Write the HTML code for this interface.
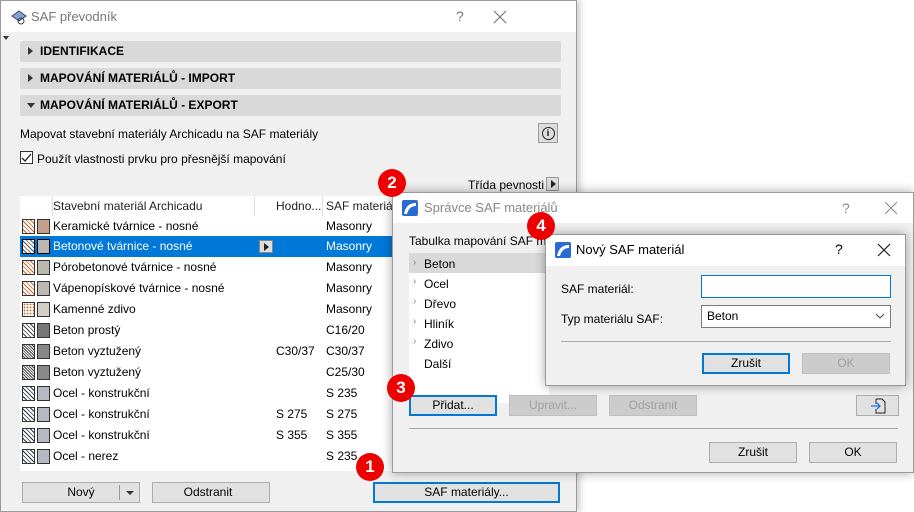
<!DOCTYPE html>
<html><head><meta charset="utf-8"><style>
*{box-sizing:border-box;margin:0;padding:0}
body{width:914px;height:509px;overflow:hidden;background:#fff;font-family:"Liberation Sans",sans-serif;font-size:12px;color:#000;position:relative}
.a{position:absolute;white-space:nowrap}
.btn{position:absolute;background:#e1e1e1;border:1px solid #adadad;text-align:center;font-size:12px;line-height:18px;white-space:nowrap}
.btn.b{border:2px solid #0078d7;line-height:16px}
.btn.d{color:#a0a0a0;background:#ccc;border-color:#bfbfbf}
.sec{position:absolute;left:20px;width:541px;height:21px;background:#d9d9d9;border-radius:2px;font-weight:bold;font-size:12px;line-height:21px;padding-left:20px}
.sec:before{content:"";position:absolute;left:8px;top:6px;border-left:5px solid #333;border-top:4px solid transparent;border-bottom:4px solid transparent}
.sec.o:before{left:7px;top:8px;border-top:5px solid #333;border-left:4px solid transparent;border-right:4px solid transparent;border-bottom:0}
.row{position:absolute;left:20px;width:372px;height:21px;line-height:21px;white-space:nowrap}
.row span{position:absolute;white-space:nowrap}
.h1{left:2px;top:3px;width:13px;height:15px;border:1px solid #333}
.h2{left:17px;top:3px;width:13px;height:15px;border:1px solid #333}
.red{position:absolute;width:28px;height:28px;border-radius:50%;background:#e00;color:#fff;font-weight:bold;font-size:17px;text-align:center;line-height:28px}
.win{position:absolute;background:#f0f0f0;border:1px solid #9a9a9a;box-shadow:0 0 10px rgba(0,0,0,.35)}
.tb{position:absolute;left:0;top:0;right:0;background:#fff}
</style></head><body>
<div class="win" style="left:0;top:0;width:577px;height:512px;box-shadow:2px 0 8px rgba(0,0,0,.25)">
 <div class="tb" style="height:31px">
  <svg class="a" style="left:9px;top:7px" width="18" height="18"><path d="M2 8 L9 3 L16 8 L9 13Z" fill="#7fa5d8" stroke="#445" stroke-width="1"/><circle cx="11" cy="13" r="3" fill="none" stroke="#444"/></svg>
  <span class="a" style="left:30px;top:8px;font-size:13px;color:#777">SAF převodník</span>
  <span class="a" style="left:455px;top:7px;font-size:14px;color:#777">?</span>
  <svg class="a" style="left:492px;top:9px" width="14" height="14"><path d="M1 1L13 13M13 1L1 13" stroke="#777" stroke-width="1.2"/></svg>
 </div>
 <div class="a" style="left:2px;top:35px;border-top:4px solid #333;border-left:3px solid transparent;border-right:3px solid transparent"></div>
</div>
<div class="sec" style="top:41px">IDENTIFIKACE</div>
<div class="sec" style="top:68px">MAPOVÁNÍ MATERIÁLŮ - IMPORT</div>
<div class="sec o" style="top:95px">MAPOVÁNÍ MATERIÁLŮ - EXPORT</div>
<div class="a" style="left:20px;top:127px">Mapovat stavební materiály Archicadu na SAF materiály</div>
<div class="a" style="left:538px;top:123px;width:20px;height:20px;background:#ddd;border:1px solid #999;text-align:center;line-height:18px"><span style="display:inline-block;width:13px;height:13px;border:1px solid #222;border-radius:50%;font-size:9px;line-height:11px;font-weight:bold;vertical-align:middle">i</span></div>
<div class="a" style="left:20px;top:151px;width:13px;height:13px;border:1px solid #333;background:#fff"><svg width="11" height="11" style="position:absolute;left:0;top:0"><path d="M1 6L4 9L10 2" stroke="#222" fill="none" stroke-width="1.3"/></svg></div>
<div class="a" style="left:37px;top:152px">Použít vlastnosti prvku pro přesnější mapování</div>
<div class="a" style="left:468px;top:178px">Třída pevnosti</div>
<div class="a" style="left:546px;top:177px;width:13px;height:14px;background:#ddd;border:1px solid #999"><div style="position:absolute;left:4px;top:2px;border-left:5px solid #222;border-top:4px solid transparent;border-bottom:4px solid transparent"></div></div>
<div class="a" style="left:20px;top:196px;width:372px;height:275px;background:#fff"></div>
<div class="row" style="top:196px;height:20px;line-height:20px;color:#222"><span style="left:32px;top:0;width:1px;height:20px;background:#ddd"></span><span style="left:33px">Stavební materiál Archicadu</span><span style="left:234px;width:1px;height:20px;background:#ddd"></span><span style="left:256px">Hodno...</span><span style="left:302px;width:1px;height:20px;background:#ddd"></span><span style="left:306px">SAF materiál</span></div>
<div class="row" style="top:216px"><span class="h1" style="background:repeating-linear-gradient(45deg,#fff 0 2px,#d06020 2px 3px)"></span><span class="h2" style="background:#c4a08a"></span><span style="left:33px">Keramické tvárnice - nosné</span><span style="left:306px">Masonry</span></div>
<div class="row" style="top:236px;background:#0078d7;color:#fff"><span class="h1" style="background:repeating-linear-gradient(45deg,#fff 0 2px,#555 2px 3px);border-color:#000"></span><span class="h2" style="background:#bbb8b2;border-color:#000"></span><span style="left:33px">Betonové tvárnice - nosné</span><span style="left:239px;top:4px;width:14px;height:13px;background:#ddd;border:1px solid #888"></span><span style="left:244px;top:7px;border-left:5px solid #222;border-top:4px solid transparent;border-bottom:4px solid transparent"></span><span style="left:306px">Masonry</span></div>
<div class="row" style="top:257px"><span class="h1" style="background:repeating-linear-gradient(45deg,#fff 0 2px,#d06020 2px 3px)"></span><span class="h2" style="background:#bbb8b2"></span><span style="left:33px">Pórobetonové tvárnice - nosné</span><span style="left:306px">Masonry</span></div>
<div class="row" style="top:278px"><span class="h1" style="background:repeating-linear-gradient(45deg,#fff 0 2px,#d06020 2px 3px)"></span><span class="h2" style="background:#bbb8b2"></span><span style="left:33px">Vápenopískové tvárnice - nosné</span><span style="left:306px">Masonry</span></div>
<div class="row" style="top:299px"><span class="h1" style="background:radial-gradient(#d06020 0.7px,#fff 1px) 0 0/3px 3px"></span><span class="h2" style="background:#d4cfc4"></span><span style="left:33px">Kamenné zdivo</span><span style="left:306px">Masonry</span></div>
<div class="row" style="top:320px"><span class="h1" style="background:repeating-linear-gradient(45deg,#fff 0 2px,#444 2px 3px)"></span><span class="h2" style="background:#777"></span><span style="left:33px">Beton prostý</span><span style="left:306px">C16/20</span></div>
<div class="row" style="top:341px"><span class="h1" style="background:repeating-linear-gradient(45deg,#fff 0 1px,#444 1px 2px)"></span><span class="h2" style="background:#888"></span><span style="left:33px">Beton vyztužený</span><span style="left:256px">C30/37</span><span style="left:306px">C30/37</span></div>
<div class="row" style="top:362px"><span class="h1" style="background:repeating-linear-gradient(45deg,#fff 0 1px,#444 1px 2px)"></span><span class="h2" style="background:#888"></span><span style="left:33px">Beton vyztužený</span><span style="left:306px">C25/30</span></div>
<div class="row" style="top:383px"><span class="h1" style="background:repeating-linear-gradient(45deg,#fff 0 2px,#234 2px 3px)"></span><span class="h2" style="background:#b8b8c4"></span><span style="left:33px">Ocel - konstrukční</span><span style="left:306px">S 235</span></div>
<div class="row" style="top:404px"><span class="h1" style="background:repeating-linear-gradient(45deg,#fff 0 2px,#234 2px 3px)"></span><span class="h2" style="background:#b8b8c4"></span><span style="left:33px">Ocel - konstrukční</span><span style="left:256px">S 275</span><span style="left:306px">S 275</span></div>
<div class="row" style="top:425px"><span class="h1" style="background:repeating-linear-gradient(45deg,#fff 0 2px,#234 2px 3px)"></span><span class="h2" style="background:#b8b8c4"></span><span style="left:33px">Ocel - konstrukční</span><span style="left:256px">S 355</span><span style="left:306px">S 355</span></div>
<div class="row" style="top:446px"><span class="h1" style="background:repeating-linear-gradient(45deg,#fff 0 2px,#234 2px 3px)"></span><span class="h2" style="background:#b8b8c4"></span><span style="left:33px">Ocel - nerez</span><span style="left:306px">S 235</span></div>
<div class="btn" style="left:22px;top:482px;width:118px;height:21px">Nový<span style="position:absolute;left:96px;top:2px;width:1px;height:15px;background:#999"></span><span style="position:absolute;left:103px;top:8px;border-top:4px solid #333;border-left:4px solid transparent;border-right:4px solid transparent"></span></div>
<div class="btn" style="left:152px;top:482px;width:118px;height:21px;line-height:19px"><span style="margin-left:-6px">Odstranit</span></div>
<div class="btn b" style="left:373px;top:482px;width:187px;height:21px;line-height:17px">SAF materiály...</div>
<div class="win" style="left:392px;top:192px;width:522px;height:281px">
 <div class="tb" style="height:30px">
  <svg class="a" style="left:9px;top:7px" width="16" height="16"><rect width="16" height="16" rx="2" fill="#2a6bd1"/><path d="M2 14 Q4 3 14 3 L14 6 Q7 6 5 14Z" fill="#fff"/></svg>
  <span class="a" style="left:31px;top:7px;font-size:13px;color:#888">Správce SAF materiálů</span>
  <span class="a" style="left:449px;top:7px;font-size:14px;color:#888">?</span>
  <svg class="a" style="left:491px;top:8px" width="14" height="14"><path d="M1 1L13 13M13 1L1 13" stroke="#888" stroke-width="1.1"/></svg>
 </div>
 <div class="a" style="left:16px;top:41px">Tabulka mapování SAF materiálů</div>
 <div class="a" style="left:16px;top:60px;width:140px;height:150px;background:#fff"></div>
 <div class="a" style="left:16px;top:60px;width:140px;height:20px;background:#d9d9d9"></div>
 <div class="a" style="left:20px;top:63px;line-height:14px;color:#888;font-size:10px">›</div><div class="a" style="left:31px;top:64px">Beton</div>
 <div class="a" style="left:20px;top:83px;color:#888;font-size:10px">›</div><div class="a" style="left:31px;top:84px">Ocel</div>
 <div class="a" style="left:20px;top:103px;color:#888;font-size:10px">›</div><div class="a" style="left:31px;top:104px">Dřevo</div>
 <div class="a" style="left:20px;top:123px;color:#888;font-size:10px">›</div><div class="a" style="left:31px;top:124px">Hliník</div>
 <div class="a" style="left:20px;top:143px;color:#888;font-size:10px">›</div><div class="a" style="left:31px;top:144px">Zdivo</div>
 <div class="a" style="left:31px;top:164px">Další</div>
 <div class="btn b" style="left:16px;top:202px;width:88px;height:21px;line-height:17px">Přidat...</div>
 <div class="btn d" style="left:116px;top:202px;width:88px;height:21px">Upravit...</div>
 <div class="btn d" style="left:216px;top:202px;width:88px;height:21px">Odstranit</div>
 <div class="btn" style="left:463px;top:202px;width:43px;height:21px"><svg width="18" height="18" style="margin-top:1px"><path d="M7 2H13L16 5V16H7V12M7 7V2" fill="none" stroke="#222"/><path d="M2 9H11M8 6L11 9L8 12" fill="none" stroke="#1a73e8" stroke-width="1.3"/></svg></div>
 <div class="a" style="left:16px;top:235px;width:489px;height:1px;background:#aaa"></div>
 <div class="btn" style="left:316px;top:249px;width:88px;height:21px">Zrušit</div>
 <div class="btn" style="left:416px;top:249px;width:88px;height:21px">OK</div>
</div>
<div class="win" style="left:545px;top:234px;width:361px;height:152px">
 <div class="tb" style="height:31px">
  <svg class="a" style="left:9px;top:7px" width="16" height="16"><rect width="16" height="16" rx="2" fill="#2a6bd1"/><path d="M2 14 Q4 3 14 3 L14 6 Q7 6 5 14Z" fill="#fff"/></svg>
  <span class="a" style="left:30px;top:7px;font-size:13px">Nový SAF materiál</span>
  <span class="a" style="left:289px;top:6px;font-size:14px">?</span>
  <svg class="a" style="left:331px;top:8px" width="14" height="14"><path d="M1 1L13 13M13 1L1 13" stroke="#222" stroke-width="1.2"/></svg>
 </div>
 <div class="a" style="left:15px;top:47px">SAF materiál:</div>
 <div class="a" style="left:155px;top:40px;width:190px;height:23px;background:#fff;border:1px solid #0078d7"></div>
 <div class="a" style="left:15px;top:77px">Typ materiálu SAF:</div>
 <div class="a" style="left:155px;top:70px;width:190px;height:23px;background:#fff;border:1px solid #7a7a7a;padding-left:5px;line-height:21px">Beton<svg style="position:absolute;right:5px;top:7px" width="10" height="6"><path d="M1 1L5 5L9 1" fill="none" stroke="#444"/></svg></div>
 <div class="a" style="left:15px;top:106px;width:330px;height:1px;background:#aaa"></div>
 <div class="btn b" style="left:156px;top:118px;width:88px;height:21px;line-height:17px">Zrušit</div>
 <div class="btn d" style="left:256px;top:118px;width:88px;height:21px">OK</div>
</div>
<div class="red" style="left:356px;top:453px">1</div>
<div class="red" style="left:378px;top:169px">2</div>
<div class="red" style="left:387px;top:374px">3</div>
<div class="red" style="left:527px;top:212px">4</div>
</body></html>
